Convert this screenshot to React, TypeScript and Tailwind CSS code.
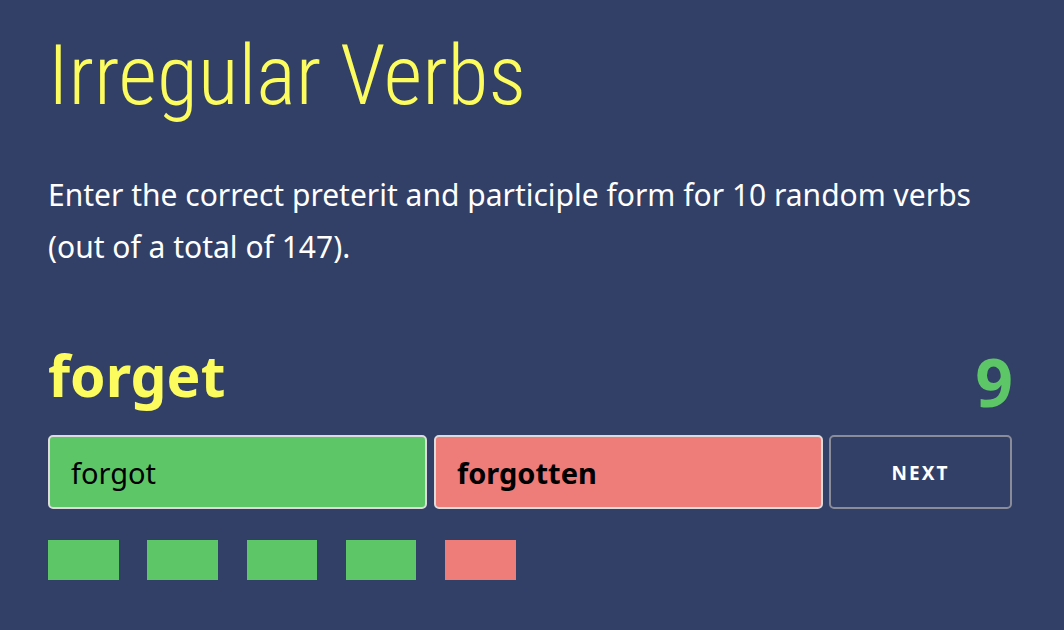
const results = ["ok", "ok", "ok", "ok", "bad"];

export default function App() {
  return (
    <div className="min-h-[630px] bg-[#323f66] px-12 pt-[26px] font-['Noto_Sans',sans-serif]">
      <h1 className="font-['Roboto_Condensed',Roboto,sans-serif] text-[84px] font-light leading-[100px] text-[#fcfc5f]">
        Irregular Verbs
      </h1>

      <p className="mt-[43px] w-[963px] text-[30px] leading-[52px] text-white">
        Enter the correct preterit and participle form for 10 random verbs
        (out of a total of 147).
      </p>

      <div className="mt-[72px] flex w-[965px] items-start justify-between">
        <h2 className="text-[57px] font-bold leading-[60px] text-[#fcfc5f]">forget</h2>
        <span className="mt-[3px] text-[66px] font-bold leading-[66px] text-[#5dc767]">9</span>
      </div>

      <form className="mt-[21px] flex h-[74px]" onSubmit={(e) => e.preventDefault()}>
        <input
          readOnly
          value="forgot"
          className="h-full w-[379px] rounded-[5px] border-2 border-[#dcdcdc] bg-[#5dc767] pl-[21px] text-[29px] text-black outline-none"
        />
        <input
          readOnly
          value="forgotten"
          className="ml-[7px] h-full w-[389px] rounded-[5px] border-2 border-[#dcdcdc] bg-[#ee7c79] pl-[21px] text-[29px] font-bold text-black outline-none"
        />
        <button
          type="submit"
          className="ml-[6px] h-full w-[183px] rounded-[5px] border-2 border-[#8a8d99] pt-[3px] text-[19px] font-bold tracking-[2px] text-white"
        >
          NEXT
        </button>
      </form>

      <div className="mt-[31px] flex gap-[28.75px]">
        {results.map((r, i) => (
          <div
            key={i}
            className={r === "ok" ? "h-10 w-[70.5px] bg-[#5dc767]" : "h-10 w-[70.5px] bg-[#ee7c79]"}
          />
        ))}
      </div>
    </div>
  );
}
